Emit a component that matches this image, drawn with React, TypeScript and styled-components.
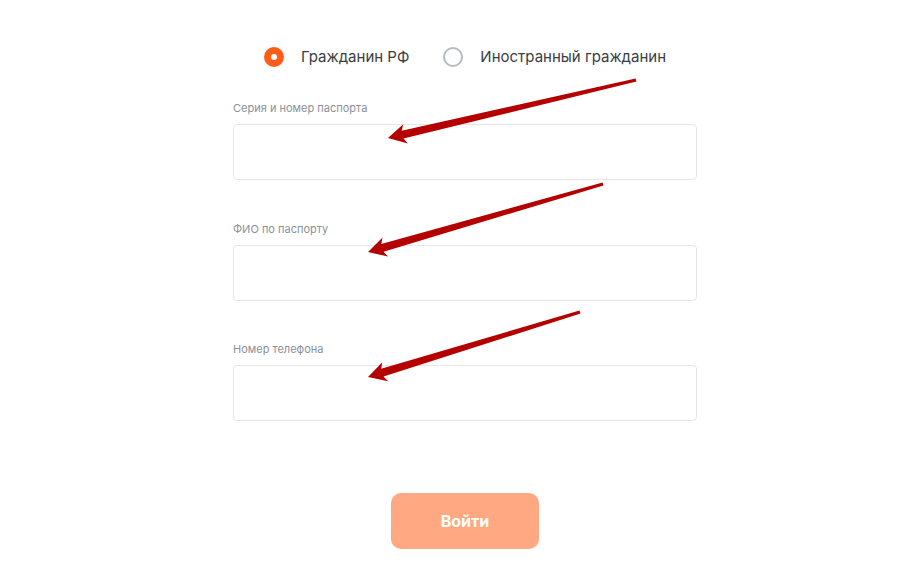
import React, { useState } from "react";
import styled, { createGlobalStyle } from "styled-components";

const GlobalStyle = createGlobalStyle`
  body {
    margin: 0;
    background: #ffffff;
    font-family: Inter, "Noto Sans", "Liberation Sans", sans-serif;
  }
`;

type Point = [number, number];

// tapered annotation arrow: thin tail, wide head
const arrowPoints = (from: Point, to: Point) => {
  const [x1, y1] = from;
  const [x2, y2] = to;
  const len = Math.hypot(x2 - x1, y2 - y1);
  const ux = (x2 - x1) / len;
  const uy = (y2 - y1) / len;
  const nx = -uy;
  const ny = ux;
  const headLen = 18;
  const headHalf = 10;
  const tailHalf = 1.6;
  const neckHalf = 4;
  const bx = x2 - ux * headLen;
  const by = y2 - uy * headLen;
  const pts: Point[] = [
    [x1 + nx * tailHalf, y1 + ny * tailHalf],
    [bx + nx * neckHalf + ux * 3, by + ny * neckHalf + uy * 3],
    [bx + nx * headHalf, by + ny * headHalf],
    [x2, y2],
    [bx - nx * headHalf, by - ny * headHalf],
    [bx - nx * neckHalf + ux * 3, by - ny * neckHalf + uy * 3],
    [x1 - nx * tailHalf, y1 - ny * tailHalf],
  ];
  return pts.map((p) => p.map((v) => v.toFixed(1)).join(",")).join(" ");
};

const arrows: { from: Point; to: Point }[] = [
  { from: [636, 80], to: [388, 138] },
  { from: [603, 184], to: [368, 252] },
  { from: [580, 312], to: [368, 377] },
];

const fields = ["Серия и номер паспорта", "ФИО по паспорту", "Номер телефона"];

const App: React.FC = () => {
  const [citizen, setCitizen] = useState<"rf" | "foreign">("rf");

  return (
    <>
      <GlobalStyle />
      <Page>
        <Form>
          <RadioRow>
            <RadioOption onClick={() => setCitizen("rf")}>
              <RadioMark $checked={citizen === "rf"} />
              <RadioText>Гражданин РФ</RadioText>
            </RadioOption>
            <RadioOption onClick={() => setCitizen("foreign")}>
              <RadioMark $checked={citizen === "foreign"} />
              <RadioText>Иностранный гражданин</RadioText>
            </RadioOption>
          </RadioRow>

          <Fields>
            {fields.map((label) => (
              <Field key={label}>
                <Label>{label}</Label>
                <Input type="text" />
              </Field>
            ))}
          </Fields>

          <SubmitButton type="button">Войти</SubmitButton>
        </Form>

        <Annotations width="924" height="565" viewBox="0 0 924 565">
          {arrows.map((a, i) => (
            <polygon key={i} points={arrowPoints(a.from, a.to)} fill="#b40000" />
          ))}
        </Annotations>
      </Page>
    </>
  );
};

export default App;

const Page = styled.div`
  position: relative;
  width: 924px;
  height: 565px;
  overflow: hidden;
`;

const Form = styled.div`
  width: 464px;
  margin-left: 233px;
  padding-top: 47px;
  display: flex;
  flex-direction: column;
`;

const RadioRow = styled.div`
  display: flex;
  justify-content: center;
  align-items: center;
  gap: 34px;
  height: 20px;
`;

const RadioOption = styled.label`
  display: flex;
  align-items: center;
  gap: 17px;
  cursor: pointer;
`;

const RadioMark = styled.span<{ $checked: boolean }>`
  box-sizing: border-box;
  width: 20px;
  height: 20px;
  border-radius: 50%;
  background: #ffffff;
  border: ${(p) => (p.$checked ? "7px solid #ff5c1a" : "2px solid #b6bac2")};
`;

const RadioText = styled.span`
  font-size: 15px;
  line-height: 20px;
  color: #3a3d42;
`;

const Fields = styled.div`
  display: flex;
  flex-direction: column;
  gap: 40.5px;
  margin-top: 33px;
`;

const Field = styled.div`
  display: flex;
  flex-direction: column;
`;

const Label = styled.span`
  font-size: 11px;
  line-height: 16px;
  color: #8b9099;
  margin-bottom: 8px;
`;

const Input = styled.input`
  box-sizing: border-box;
  height: 56px;
  width: 100%;
  border: 1px solid #e4e6ea;
  border-radius: 4px;
  outline: none;
  padding: 0 16px;
  font-family: inherit;
  font-size: 16px;
`;

const SubmitButton = styled.button`
  align-self: center;
  width: 148px;
  height: 56px;
  margin-top: 72px;
  border: none;
  border-radius: 10px;
  background: #ffa881;
  color: #ffffff;
  font-family: inherit;
  font-size: 16px;
  font-weight: 700;
  cursor: pointer;
`;

const Annotations = styled.svg`
  position: absolute;
  top: 0;
  left: 0;
  pointer-events: none;
`;
